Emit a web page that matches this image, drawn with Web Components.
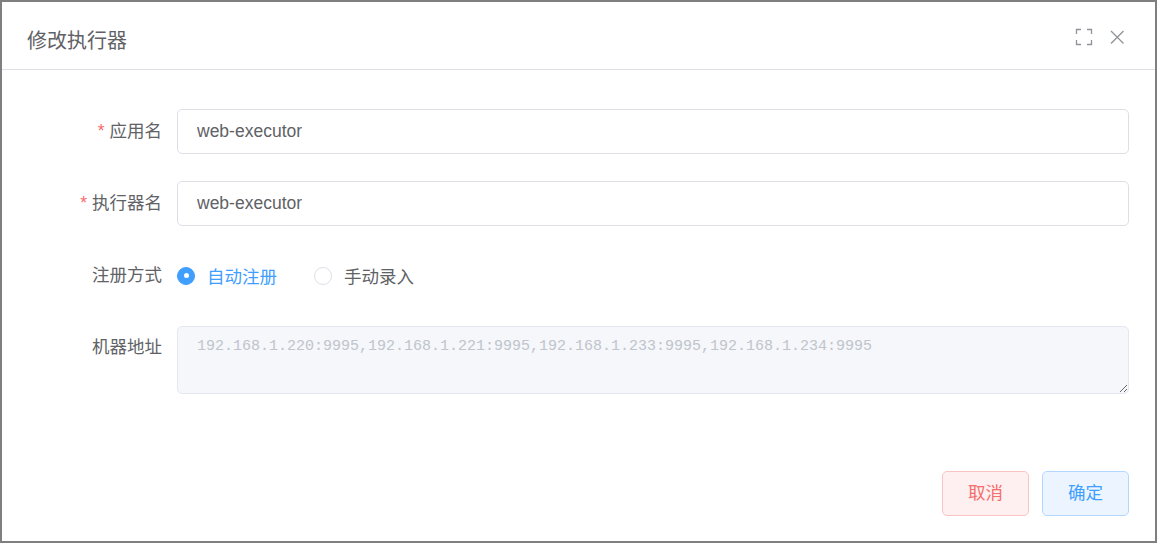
<!DOCTYPE html>
<html>
<head>
<meta charset="utf-8">
<title>修改执行器</title>
<style>
html,body{margin:0;height:100%;}
body{background:#7f7f7f;overflow:hidden;font-family:"Liberation Sans","Noto Sans CJK SC",sans-serif;}
</style>
</head>
<body>
<edit-dialog heading="修改执行器">
    <form-row label="应用名" required><text-field value="web-executor"></text-field></form-row>
    <form-row label="执行器名" required><text-field value="web-executor"></text-field></form-row>
    <form-row label="注册方式" class="radios">
        <radio-option checked>自动注册</radio-option>
        <radio-option>手动录入</radio-option>
    </form-row>
    <form-row label="机器地址" class="last"><area-field value="192.168.1.220:9995,192.168.1.221:9995,192.168.1.233:9995,192.168.1.234:9995"></area-field></form-row>
    <plain-button slot="footer" kind="danger">取消</plain-button>
    <plain-button slot="footer" kind="primary">确定</plain-button>
</edit-dialog>
<script>
class editDialog extends HTMLElement{
    constructor(){
        super();
        this.attachShadow({mode:"open"});
    }
    connectedCallback(){
        this.shadowRoot.innerHTML = `
            <style>
                :host{
                    display:flex;
                    flex-direction:column;
                    box-sizing:border-box;
                    margin:2px;
                    height:539px;
                    background:#fff;
                    color:#606266;
                }
                header{
                    display:flex;
                    align-items:flex-start;
                    justify-content:space-between;
                    height:68px;
                    box-sizing:border-box;
                    border-bottom:1px solid #dcdfe6;
                    padding:25px 30px 0 25px;
                }
                h2{
                    margin:0;
                    font-size:20px;
                    font-weight:400;
                    line-height:28px;
                    color:#606266;
                }
                .tools{
                    display:flex;
                    gap:16px;
                    margin-top:1px;
                }
                svg{display:block;fill:none;stroke:#909399;stroke-width:1.3;}
                main{
                    flex:1;
                    padding:39px 26px 0 0;
                }
                footer{
                    display:flex;
                    justify-content:flex-end;
                    gap:13px;
                    padding:0 26px 25px 0;
                }
            </style>
            <header>
                <h2>${this.getAttribute("heading")}</h2>
                <div class="tools">
                    <svg width="18" height="18" viewBox="0 0 18 18"><path d="M1.5 6V1.5H6M12 1.5h4.500V6M16.500 12v4.500H12M6 16.500H1.500V12"/></svg>
                    <svg width="16" height="18" viewBox="0 0 16 18"><path d="M2 3l12.500 12.500M14.500 3L2 15.500"/></svg>
                </div>
            </header>
            <main><slot></slot></main>
            <footer><slot name="footer"></slot></footer>
        `;
    }
}
customElements.define("edit-dialog", editDialog);

class formRow extends HTMLElement{
    constructor(){
        super();
        this.attachShadow({mode:"open"});
    }
    connectedCallback(){
        const star = this.hasAttribute("required") ? `<i>*</i>` : ``;
        this.shadowRoot.innerHTML = `
            <style>
                :host{
                    display:flex;
                    margin-bottom:27px;
                    font-size:17.5px;
                }
                :host(.radios){margin-bottom:28px;}
                label{
                    flex:none;
                    width:160px;
                    text-align:right;
                    line-height:45px;
                    color:#606266;
                }
                i{
                    font-style:normal;
                    color:#f56c6c;
                    margin-right:5px;
                }
                .control{
                    flex:1;
                    margin-left:15px;
                    display:flex;
                    align-items:center;
                    min-height:45px;
                }
                :host(.last) label{line-height:42px;}
            </style>
            <label>${star}${this.getAttribute("label")}</label>
            <div class="control"><slot></slot></div>
        `;
    }
}
customElements.define("form-row", formRow);

class textField extends HTMLElement{
    constructor(){
        super();
        this.attachShadow({mode:"open"});
    }
    connectedCallback(){
        this.shadowRoot.innerHTML = `
            <style>
                :host{display:block;width:100%;}
                input{
                    display:block;
                    box-sizing:border-box;
                    width:100%;
                    height:45px;
                    padding:0 19px;
                    border:1px solid #dcdfe6;
                    border-radius:5px;
                    outline:none;
                    background:#fff;
                    color:#606266;
                    font:17.5px "Liberation Sans","Noto Sans CJK SC",sans-serif;
                }
            </style>
            <input type="text" value="${this.getAttribute("value")}">
        `;
    }
}
customElements.define("text-field", textField);

class areaField extends HTMLElement{
    constructor(){
        super();
        this.attachShadow({mode:"open"});
    }
    connectedCallback(){
        this.shadowRoot.innerHTML = `
            <style>
                :host{display:block;width:100%;}
                textarea{
                    display:block;
                    box-sizing:border-box;
                    width:100%;
                    height:68px;
                    padding:10px 19px;
                    border:1px solid #e4e7ed;
                    border-radius:5px;
                    outline:none;
                    background:#f5f7fa;
                    color:#c0c4cc;
                    font:15px/20px "Liberation Mono",monospace;
                }
            </style>
            <textarea disabled>${this.getAttribute("value")}</textarea>
        `;
    }
}
customElements.define("area-field", areaField);

class radioOption extends HTMLElement{
    constructor(){
        super();
        this.attachShadow({mode:"open"});
    }
    connectedCallback(){
        this.shadowRoot.innerHTML = `
            <style>
                :host{
                    display:inline-flex;
                    align-items:center;
                    gap:12px;
                    margin-right:37px;
                    font-size:17.5px;
                    color:#606266;
                }
                :host([checked]){color:#409eff;}
                b{
                    box-sizing:border-box;
                    display:flex;
                    align-items:center;
                    justify-content:center;
                    width:18px;
                    height:18px;
                    border:1px solid #dcdfe6;
                    border-radius:50%;
                    background:#fff;
                }
                :host([checked]) b{background:#409eff;border-color:#409eff;}
                :host([checked]) b::after{
                    content:"";
                    width:5px;
                    height:5px;
                    border-radius:50%;
                    background:#fff;
                }
            </style>
            <b></b><span><slot></slot></span>
        `;
    }
}
customElements.define("radio-option", radioOption);

class plainButton extends HTMLElement{
    constructor(){
        super();
        this.attachShadow({mode:"open"});
    }
    connectedCallback(){
        this.shadowRoot.innerHTML = `
            <style>
                :host{
                    display:block;
                    box-sizing:border-box;
                    width:87px;
                    height:45px;
                    line-height:43px;
                    text-align:center;
                    border:1px solid #b3d8ff;
                    border-radius:5px;
                    background:#ecf5ff;
                    color:#409eff;
                    font-size:17.5px;
                }
                :host([kind=danger]){
                    border-color:#fbc4c4;
                    background:#fef0f0;
                    color:#f56c6c;
                }
            </style>
            <slot></slot>
        `;
    }
}
customElements.define("plain-button", plainButton);
</script>
</body>
</html>
